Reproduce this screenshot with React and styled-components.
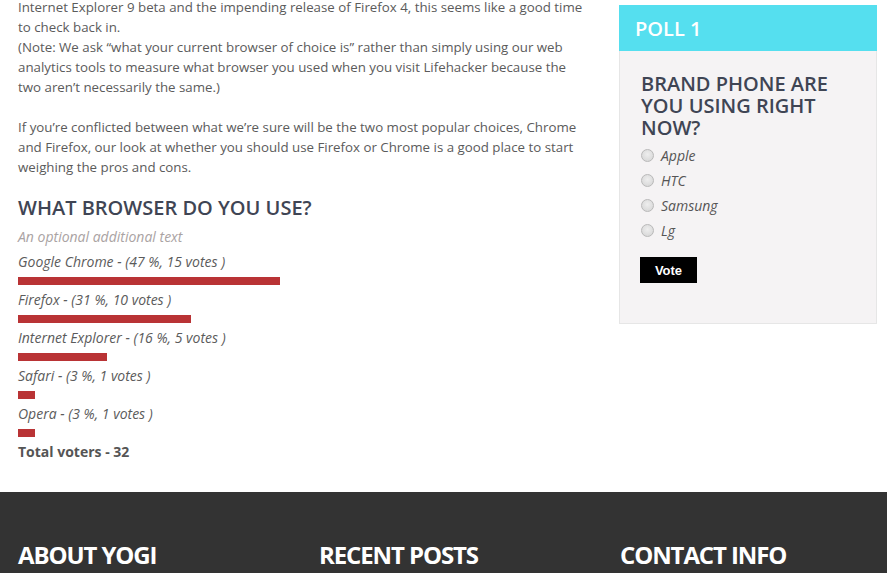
import React from "react";
import styled, { createGlobalStyle } from "styled-components";

const GlobalStyle = createGlobalStyle`
  html, body {
    margin: 0;
    padding: 0;
    background: #fff;
    overflow: hidden;
  }
  body {
    font-family: "Open Sans", "DejaVu Sans", sans-serif;
    font-size: 14px;
    color: #5b5b5b;
  }
`;

const Page = styled.div`
  width: 887px;
  height: 573px;
  overflow: hidden;
`;

const Main = styled.div`
  display: flex;
  align-items: flex-start;
  padding-left: 18px;
`;

const Content = styled.div`
  width: 568px;
  flex: none;
`;

const Paragraph = styled.p`
  margin: ${({ $first }) => ($first ? "-3px 0 20px" : "0")};
  line-height: 20px;
  font-size: 13.3px;
  color: #5b5b5b;
`;

const PollTitle = styled.h2`
  margin: 18px 0 6px;
  font-size: 20px;
  line-height: 26px;
  font-weight: 600;
  color: #3f4554;
  text-transform: uppercase;
`;

const Optional = styled.div`
  font-style: italic;
  line-height: 20px;
  color: #aaa3a3;
  margin-bottom: 5px;
`;

const ResultItem = styled.div`
  display: flex;
  flex-direction: column;
`;

const ResultLabel = styled.div`
  font-style: italic;
  line-height: 20px;
  color: #5b5b5b;
`;

const Bar = styled.div`
  height: 8px;
  background: #b93335;
  margin: 5px 0;
`;

const Total = styled.div`
  font-weight: 700;
  line-height: 20px;
  color: #555;
`;

const Sidebar = styled.aside`
  width: 258px;
  flex: none;
  margin-left: 33px;
  margin-top: 5px;
`;

const WidgetHeader = styled.div`
  height: 46px;
  background: #55dfef;
  display: flex;
  align-items: center;
  padding-left: 16px;
  font-size: 20px;
  font-weight: 600;
  color: #fff;
`;

const WidgetBody = styled.div`
  background: #f5f3f4;
  border: 1px solid #e6e6e6;
  border-top: none;
  padding: 22px 21px 41px;
  height: 273px;
  box-sizing: border-box;
`;

const Question = styled.h3`
  margin: 0 0 4px;
  font-size: 20px;
  line-height: 22px;
  font-weight: 600;
  color: #3f4554;
  text-transform: uppercase;
`;

const Option = styled.label`
  display: flex;
  align-items: center;
  height: 25px;
  font-style: italic;
  color: #555;
`;

const Radio = styled.input.attrs({ type: "radio" })`
  appearance: none;
  width: 13px;
  height: 13px;
  margin: 0 7px 0 0;
  border-radius: 50%;
  border: 1px solid #b9b9b9;
  box-sizing: border-box;
  background: radial-gradient(circle at 50% 40%, #eeeeee, #d3d3d3);
`;

const VoteButton = styled.button`
  margin-top: 14px;
  width: 57px;
  height: 26px;
  background: #000;
  color: #fff;
  border: none;
  font-family: "Liberation Sans", Arial, sans-serif;
  font-weight: 700;
  font-size: 13px;
  padding: 0;
  margin-left: -1px;
`;

const Footer = styled.footer`
  margin-top: 30px;
  background: #333;
  height: 120px;
  padding: 49px 18px 0;
  display: grid;
  grid-template-columns: 283px 283px 283px;
  column-gap: 18px;
`;

const FooterTitle = styled.h4`
  margin: 0;
  font-size: 24px;
  line-height: 28px;
  font-weight: 700;
  color: #fff;
  letter-spacing: -1.1px;
  text-transform: uppercase;
`;

const results = [
  { name: "Google Chrome", pct: 47, votes: 15 },
  { name: "Firefox", pct: 31, votes: 10 },
  { name: "Internet Explorer", pct: 16, votes: 5 },
  { name: "Safari", pct: 3, votes: 1 },
  { name: "Opera", pct: 3, votes: 1 },
];

const phones = ["Apple", "HTC", "Samsung", "Lg"];

export default function App() {
  return (
    <Page>
      <GlobalStyle />
      <Main>
        <Content>
          <Paragraph $first>
            Internet Explorer 9 beta and the impending release of Firefox 4, this seems like a good time
            to check back in.
            <br />
            (Note: We ask “what your current browser of choice is” rather than simply using our web
            analytics tools to measure what browser you used when you visit Lifehacker because the
            two aren’t necessarily the same.)
          </Paragraph>
          <Paragraph>
            If you’re conflicted between what we’re sure will be the two most popular choices, Chrome
            and Firefox, our look at whether you should use Firefox or Chrome is a good place to start
            weighing the pros and cons.
          </Paragraph>
          <PollTitle>What browser do you use?</PollTitle>
          <Optional>An optional additional text</Optional>
          {results.map((r) => (
            <ResultItem key={r.name}>
              <ResultLabel>
                {r.name} - ({r.pct} %, {r.votes} votes )
              </ResultLabel>
              <Bar style={{ width: `${(r.pct / 100) * 557}px` }} />
            </ResultItem>
          ))}
          <Total>Total voters - 32</Total>
        </Content>
        <Sidebar>
          <WidgetHeader>POLL 1</WidgetHeader>
          <WidgetBody>
            <Question>Brand phone are you using right now?</Question>
            {phones.map((p) => (
              <Option key={p}>
                <Radio name="phone" />
                {p}
              </Option>
            ))}
            <VoteButton>Vote</VoteButton>
          </WidgetBody>
        </Sidebar>
      </Main>
      <Footer>
        <FooterTitle>About Yogi</FooterTitle>
        <FooterTitle>Recent Posts</FooterTitle>
        <FooterTitle>Contact Info</FooterTitle>
      </Footer>
    </Page>
  );
}
